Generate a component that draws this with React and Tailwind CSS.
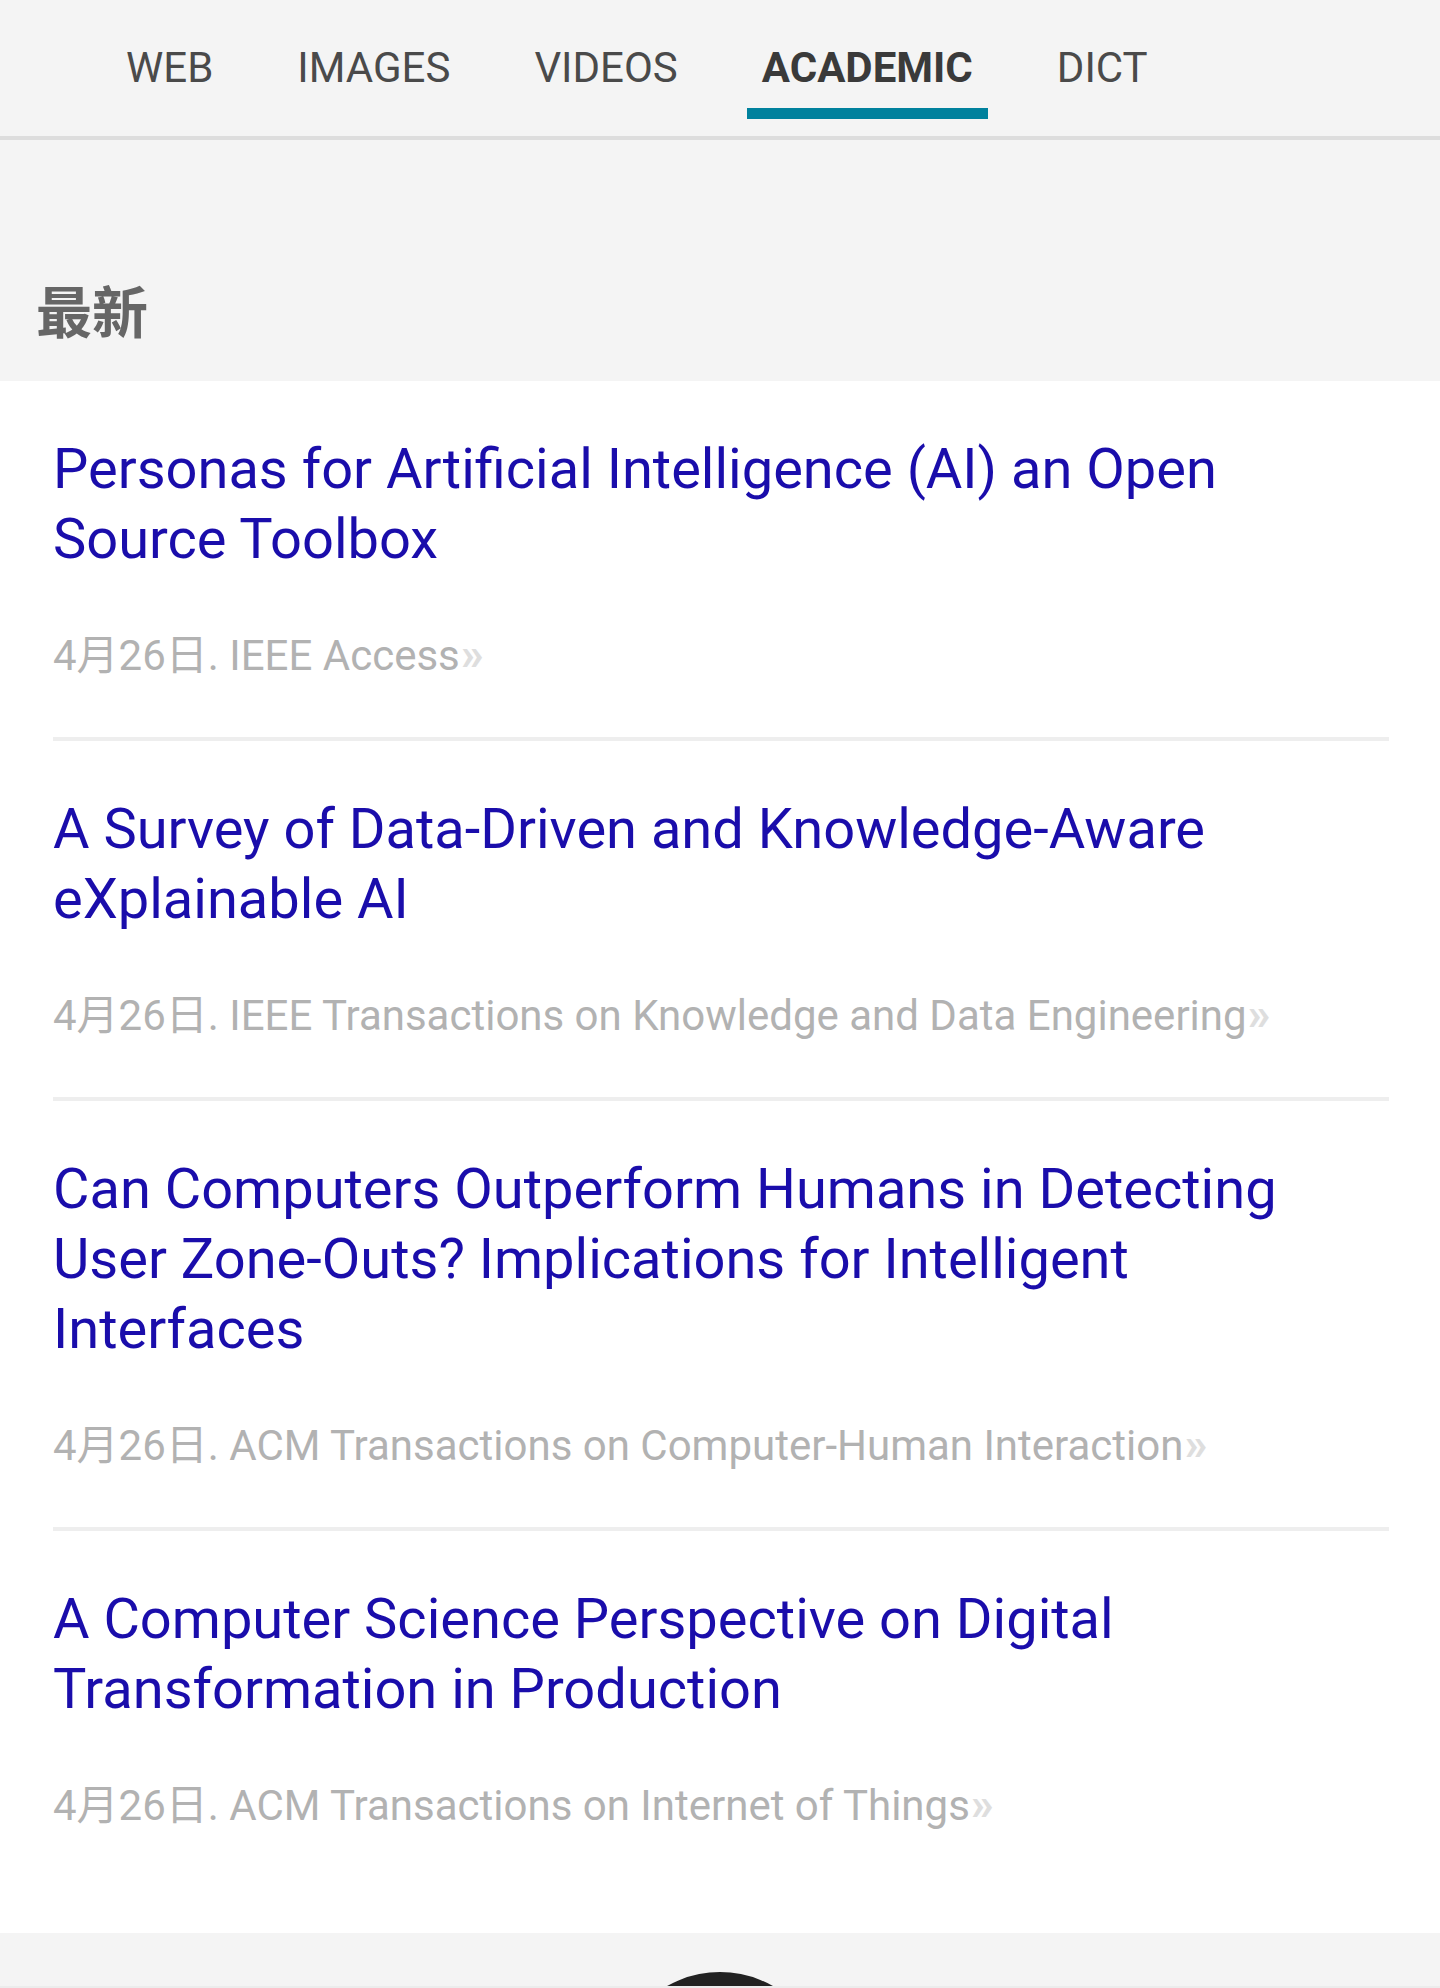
import React from "react";

const tabs = [
  { label: "WEB" },
  { label: "IMAGES" },
  { label: "VIDEOS" },
  { label: "ACADEMIC", active: true },
  { label: "DICT" },
];

const articles = [
  {
    title: "Personas for Artificial Intelligence (AI) an Open Source Toolbox",
    source: "IEEE Access",
  },
  {
    title: "A Survey of Data-Driven and Knowledge-Aware eXplainable AI",
    source: "IEEE Transactions on Knowledge and Data Engineering",
  },
  {
    title: "Can Computers Outperform Humans in Detecting User Zone-Outs? Implications for Intelligent Interfaces",
    source: "ACM Transactions on Computer-Human Interaction",
  },
  {
    title: "A Computer Science Perspective on Digital Transformation in Production",
    source: "ACM Transactions on Internet of Things",
  },
];

const App = () => {
  return (
    <div className="min-h-screen bg-white font-['Roboto','Noto_Sans_CJK_SC',sans-serif]">
      {/* Top tabs */}
      <nav className="h-[136px] box-content bg-[#f4f4f4] border-b-4 border-[#dddddd]">
        <div className="flex gap-[54px] pl-[111px]">
          {tabs.map((tab) => (
            <div key={tab.label} className="flex flex-col pt-[43px]">
              <div
                className={`px-[15px] h-[50px] text-[42px] leading-[50px] whitespace-nowrap ${
                  tab.active ? "font-bold text-[#3a3a3a]" : "text-[#4a4a4a]"
                }`}
              >
                {tab.label}
              </div>
              <div className={`mt-[15px] h-[11px] ${tab.active ? "bg-[#00819d]" : "bg-transparent"}`} />
            </div>
          ))}
        </div>
      </nav>

      {/* Section header */}
      <div className="bg-[#f4f4f4] pl-[36px] pt-[146px] pb-[39px]">
        <h2 className="text-[56px] leading-[56px] font-bold text-[#666666]">最新</h2>
      </div>

      {/* Article list */}
      <div className="pl-[53px] pr-[51px] pb-[46px]">
        {articles.map((a, i) => (
          <div
            key={i}
            className={`pt-[53px] pb-[56px] ${i < articles.length - 1 ? "border-b-4 border-[#eeeeee]" : ""}`}
          >
            <div className="text-[56px] leading-[70px] text-[#1a0dab] pr-[20px]">{a.title}</div>
            <div className="mt-[57px] h-[50px] overflow-visible text-[42px] leading-[50px] text-[#b2b2b2] whitespace-nowrap">
              4月26日. {a.source}
              <span className="ml-[1px] text-[46px] leading-none font-bold text-[#dedede]">»</span>
            </div>
          </div>
        ))}
      </div>

      {/* Footer */}
      <div className="bg-[#f4f4f4]">
        <div className="h-[53px] overflow-hidden flex justify-center">
          <div className="mt-[39px] shrink-0 w-[214px] h-[214px] rounded-full bg-[#222222]" />
        </div>
        <div className="h-[2px] bg-[#ececec]" />
      </div>
    </div>
  );
};

export default App;
